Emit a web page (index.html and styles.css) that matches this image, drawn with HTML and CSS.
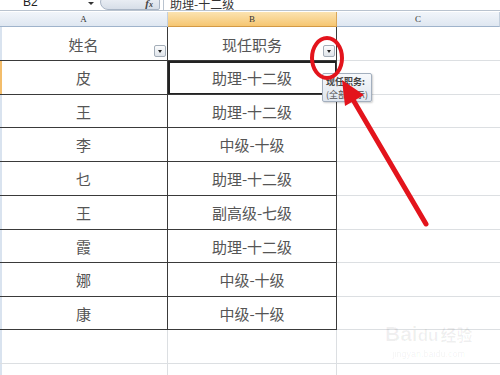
FILE: index.html
```html
<!DOCTYPE html>
<html lang="zh">
<head>
<meta charset="utf-8">
<link rel="stylesheet" href="styles.css">
</head>
<body>
<div class="app">
  <div class="formula">
    <div class="namebox">B2</div>
    <div class="namearrow"></div>
    <div class="fxbtn"><span class="fx">f<span class="fxx">x</span></span></div>
    <div class="fxinput">助理-十二级</div>
  </div>
  <div class="colheads">
    <div class="ch">A</div>
    <div class="ch sel">B</div>
    <div class="ch">C</div>
  </div>
  <div class="sheet">
    <div class="c a hd">姓名<span class="filter"></span></div>
    <div class="c b hd">现任职务<span class="filter"></span></div>
    <div class="c g"></div>

    <div class="c a selrow">皮</div>
    <div class="c b active">助理-十二级</div>
    <div class="c g"></div>

    <div class="c a">王</div>
    <div class="c b">助理-十二级</div>
    <div class="c g"></div>

    <div class="c a">李</div>
    <div class="c b">中级-十级</div>
    <div class="c g"></div>

    <div class="c a">乜</div>
    <div class="c b">助理-十二级</div>
    <div class="c g"></div>

    <div class="c a">王</div>
    <div class="c b">副高级-七级</div>
    <div class="c g"></div>

    <div class="c a">霞</div>
    <div class="c b">助理-十二级</div>
    <div class="c g"></div>

    <div class="c a">娜</div>
    <div class="c b">中级-十级</div>
    <div class="c g"></div>

    <div class="c a">康</div>
    <div class="c b">中级-十级</div>
    <div class="c g"></div>

    <div class="c a e"></div>
    <div class="c b e"></div>
    <div class="c g"></div>

    <div class="c a e"></div>
    <div class="c b e"></div>
    <div class="c g"></div>
  </div>

  <div class="tooltip">
    <div class="tt-title">现任职务:</div>
    <div class="tt-body">(全部显示)</div>
  </div>

  <div class="watermark">
    <div class="wm-logo">Bai<span class="wm-du">du</span><span class="wm-cn">经验</span></div>
    <div class="wm-url">jingyan.baidu.com</div>
  </div>

  <svg class="annot" width="500" height="375" viewBox="0 0 500 375">
    <ellipse cx="327" cy="58" rx="15" ry="20" fill="none" stroke="#e3141c" stroke-width="4"/>
    <line x1="426" y1="224" x2="352" y2="98" stroke="#e3141c" stroke-width="5" stroke-linecap="round"/>
    <polygon points="342,80 364,95 345,106" fill="#e3141c"/>
  </svg>
</div>
</body>
</html>
```

FILE: styles.css
```css
* { box-sizing: border-box; }
html, body { margin: 0; padding: 0; }
body {
  width: 500px;
  height: 375px;
  overflow: hidden;
  background: #fff;
  font-family: "Noto Sans CJK SC", "Liberation Sans", sans-serif;
}
.app {
  position: relative;
  width: 500px;
  height: 375px;
  overflow: hidden;
}

/* formula bar */
.formula {
  display: flex;
  align-items: flex-start;
  height: 11px;
  border-bottom: 1px solid #b9c3cf;
  overflow: hidden;
  margin-bottom: 1px;
}
.namebox {
  width: 86px;
  padding-left: 23px;
  margin-top: -5px;
  font-family: "Liberation Sans", sans-serif;
  font-size: 12px;
  line-height: 15px;
  color: #222;
}
.namearrow {
  width: 0;
  height: 0;
  margin-top: 2px;
  margin-left: 2px;
  border-left: 3px solid transparent;
  border-right: 3px solid transparent;
  border-top: 3px solid #333;
}
.fxbtn {
  margin-left: 6px;
  width: 60px;
  height: 16px;
  margin-top: -6px;
  border: 1px solid #a9b5c5;
  border-radius: 8px 2px 2px 8px;
  background: linear-gradient(#f2f5f9, #d7dee8);
  position: relative;
}
.fx {
  position: absolute;
  right: 6px;
  top: 3px;
  font-family: "Liberation Serif", serif;
  font-style: italic;
  font-weight: bold;
  font-size: 11px;
  line-height: 11px;
  color: #444;
}
.fxx { font-size: 8px; }
.fxinput {
  margin-left: 3px;
  border-left: 1px solid #b9c3cf;
  padding-left: 6px;
  font-size: 12px;
  line-height: 13px;
  color: #333;
  flex: 1;
  position: relative;
  top: -3px;
  height: 14px;
}

/* column headers */
.colheads {
  display: grid;
  grid-template-columns: 168px 169px 163px;
  height: 15px;
}
.ch {
  background: linear-gradient(#f1f5fa, #dfe7f1);
  border-right: 1px solid #c4d0de;
  border-bottom: 1px solid #9fb3cb;
  font-family: "Liberation Serif", serif;
  font-size: 9px;
  line-height: 14px;
  text-align: center;
  color: #333;
}
.ch.sel {
  background: linear-gradient(#fbe3b1, #f6c671);
  border-right-color: #d9a75a;
  border-bottom-color: #d39a45;
}

/* sheet */
.sheet {
  display: grid;
  grid-template-columns: 168px 169px 163px;
  grid-template-rows: 34px 34px 33px 34px 34px 34px 33px 34px 33px 34px 34px;
}
.c {
  display: flex;
  align-items: center;
  justify-content: center;
  font-size: 15px;
  color: #555;
  position: relative;
}
.a, .b {
  border-right: 1px solid #3a3a3a;
  border-bottom: 1px solid #3a3a3a;
}
.a { box-shadow: inset 2px 0 0 #d9e3ef; }
.a.selrow { box-shadow: inset 2px 0 0 #f3bd6b; }
.hd { padding-top: 1px; }
.g {
  border-bottom: 1px solid #dcdfe2;
}
.a.e, .b.e {
  border-right-color: #dcdfe2;
  border-bottom-color: #dcdfe2;
}
.active {
  box-shadow: inset 1px 1px 0 #222, inset -1px -1px 0 #222;
}
.active::after {
  content: "";
  position: absolute;
  left: 1px; top: 1px; right: 0; bottom: 0;
  border: 1px solid #222;
}

.filter {
  position: absolute;
  right: 1px;
  bottom: 3px;
  width: 12px;
  height: 12px;
  border: 1px solid #a3adb8;
  border-radius: 2px;
  background: linear-gradient(#fbfcfd, #dfe4ea);
}
.filter::after {
  content: "";
  position: absolute;
  left: 3px;
  top: 4px;
  border-left: 2.5px solid transparent;
  border-right: 2.5px solid transparent;
  border-top: 3px solid #222;
}

/* tooltip */
.tooltip {
  position: absolute;
  left: 322px;
  top: 73px;
  width: 50px;
  height: 29px;
  border: 1px solid #a3afbe;
  border-radius: 2px;
  background: linear-gradient(#f6f8fb, #dfe6ef);
  box-shadow: 1px 1px 2px rgba(0,0,0,0.2);
  padding: 1px 0 0 3px;
  font-size: 9px;
  line-height: 13px;
  color: #555;
  white-space: nowrap;
}
.tt-title { font-weight: bold; color: #444; }

/* watermark */
.watermark {
  position: absolute;
  left: 385px;
  top: 322px;
  white-space: nowrap;
  text-align: center;
  color: rgba(0,0,0,0.06);
  font-family: "Liberation Sans", sans-serif;
}
.wm-logo {
  font-size: 21px;
  font-weight: bold;
  line-height: 24px;
}
.wm-du { font-size: 17px; }
.wm-cn {
  font-family: "Noto Sans CJK SC", sans-serif;
  font-size: 16px;
  margin-left: 2px;
}
.wm-url {
  font-size: 9px;
  line-height: 12px;
}

.annot {
  position: absolute;
  left: 0;
  top: 0;
  pointer-events: none;
}
```
